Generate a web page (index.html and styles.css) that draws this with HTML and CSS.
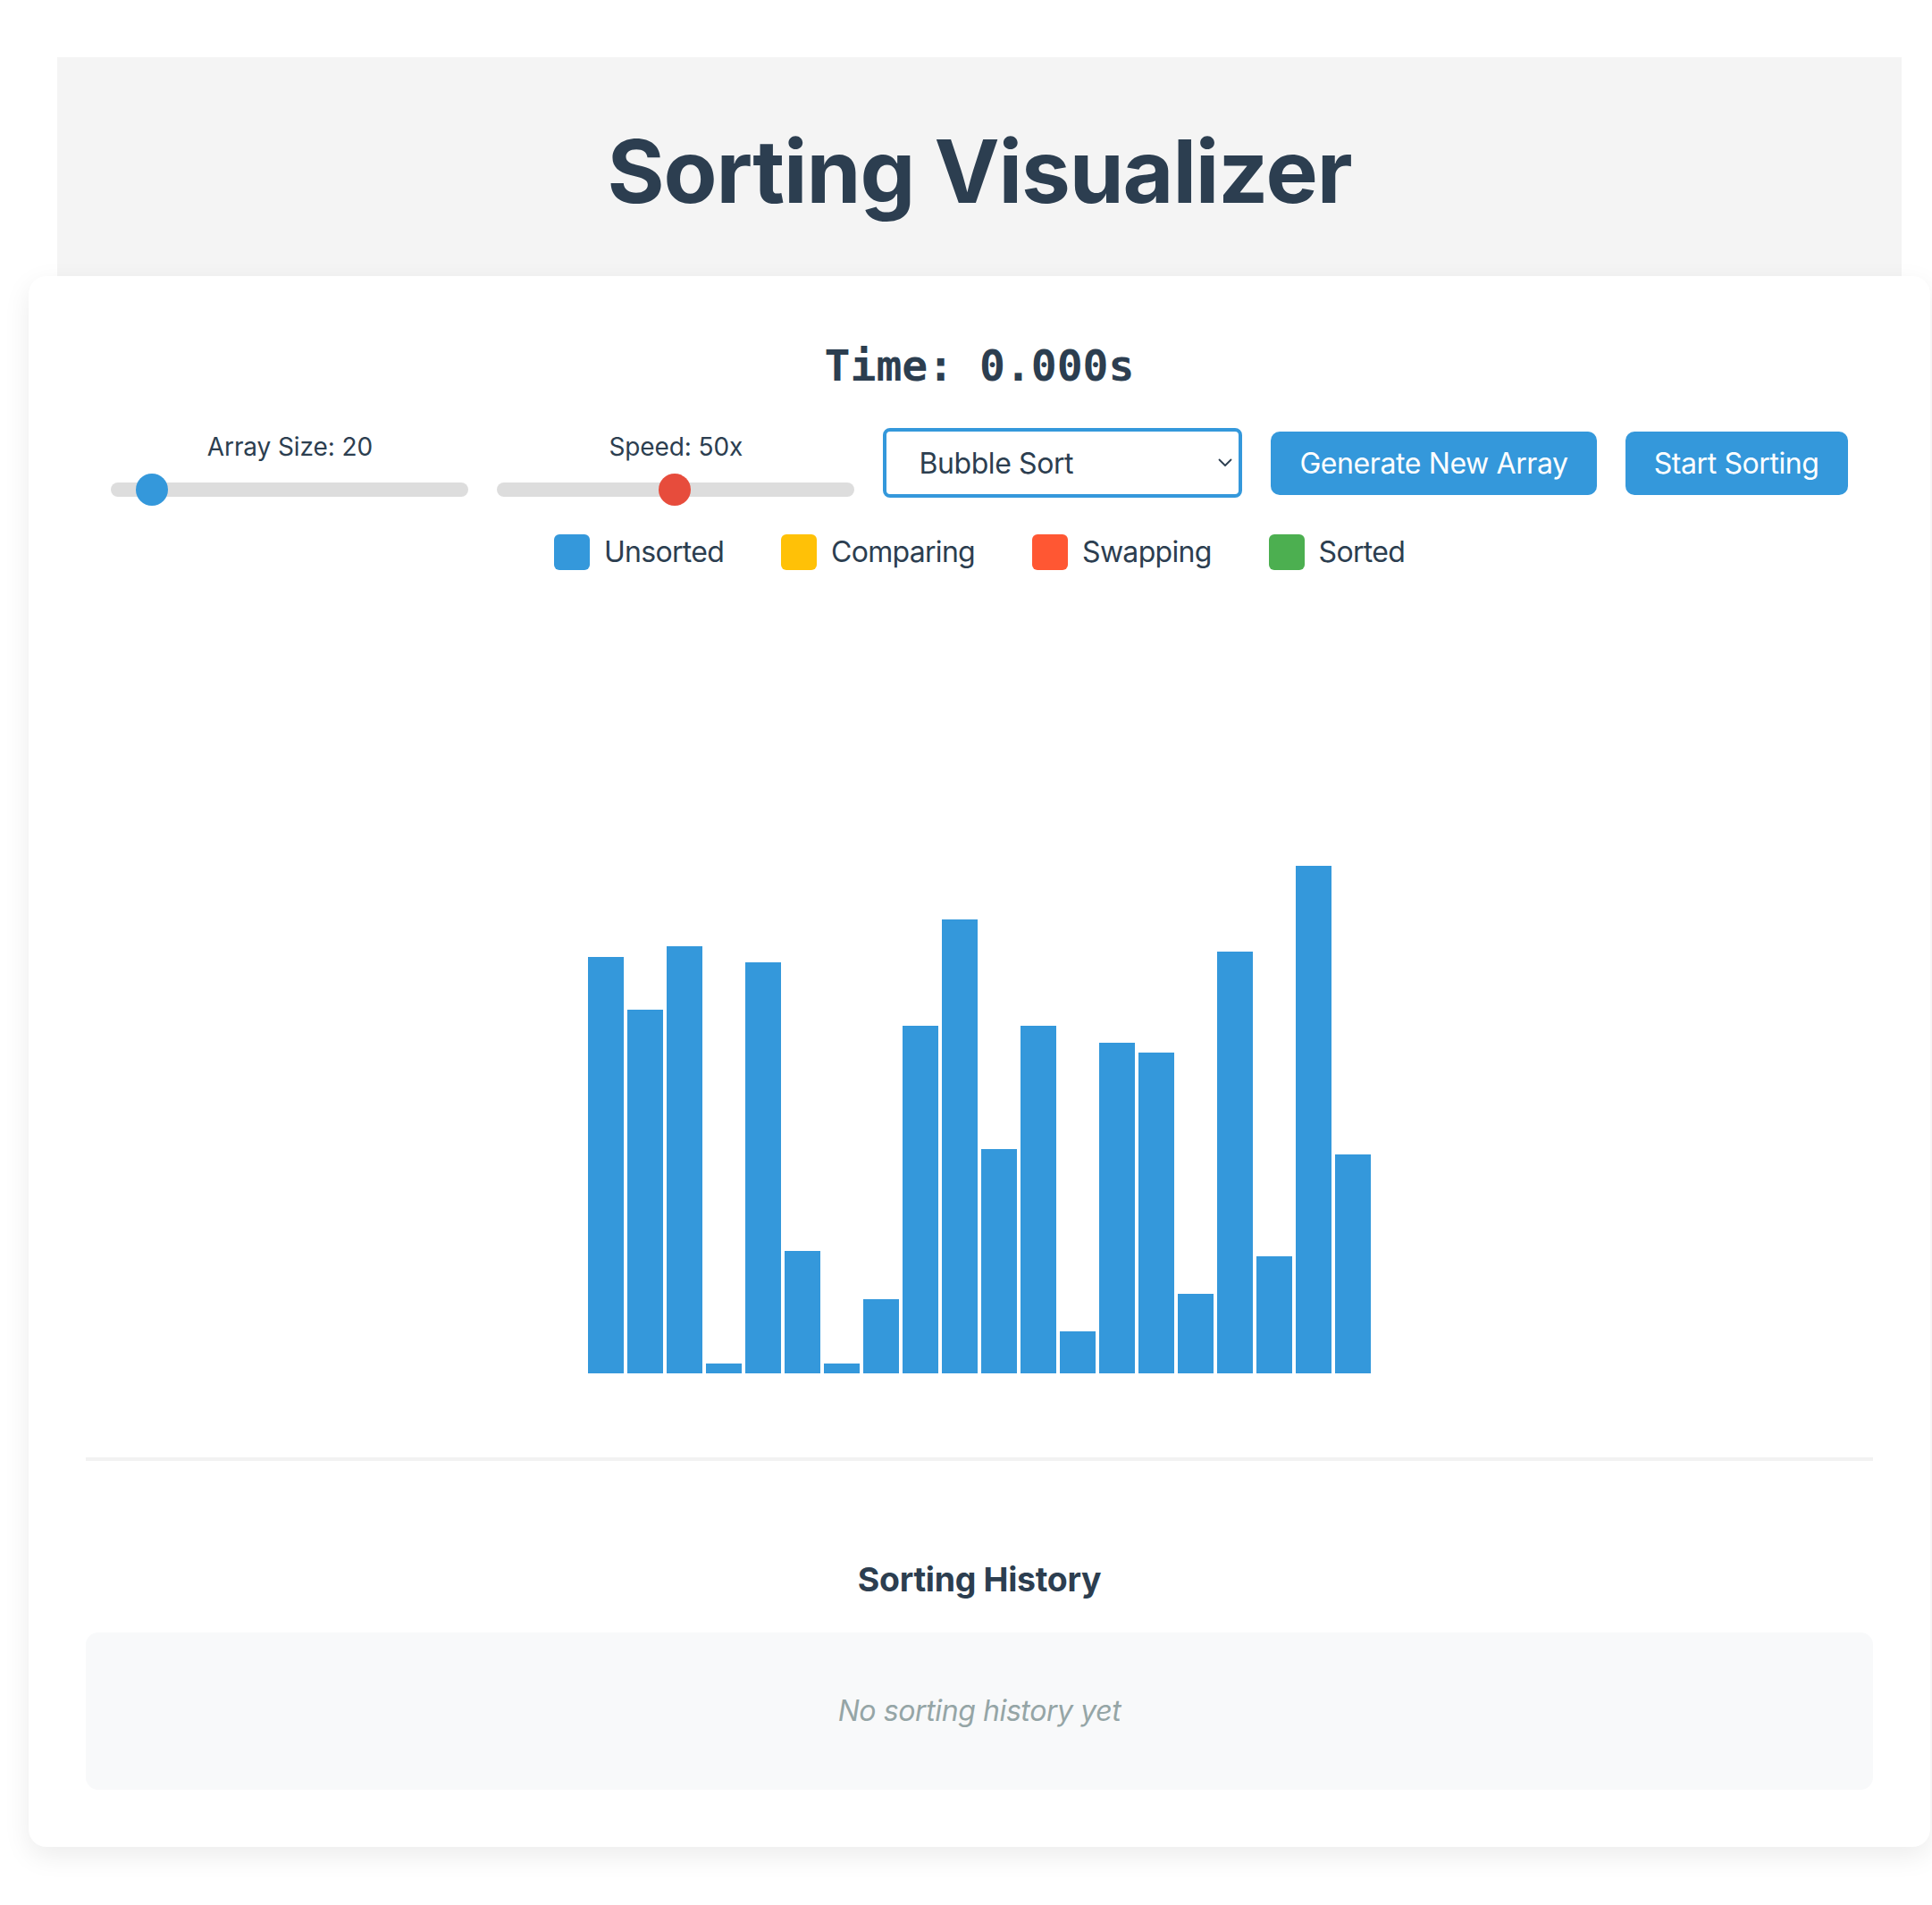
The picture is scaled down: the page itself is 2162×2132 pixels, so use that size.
FILE: index.html
```html
<!DOCTYPE html>
<html lang="en">
<head>
<meta charset="utf-8">
<title>Sorting Visualizer</title>
<link rel="stylesheet" href="styles.css">
</head>
<body>
<div class="app">
  <header class="header">
    <h1 class="title">Sorting Visualizer</h1>
  </header>
  <main class="card">
    <div class="timer">Time: 0.000s</div>
    <div class="controls">
      <div class="slider-group">
        <label class="slider-label">Array Size: 20</label>
        <input class="slider" type="range" min="5" max="200" value="20">
      </div>
      <div class="slider-group">
        <label class="slider-label">Speed: 50x</label>
        <input class="slider slider-speed" type="range" min="1" max="100" value="50">
      </div>
      <div class="select-wrap">
        <select class="algo-select">
          <option>Bubble Sort</option>
          <option>Selection Sort</option>
          <option>Insertion Sort</option>
          <option>Merge Sort</option>
          <option>Quick Sort</option>
        </select>
        <svg class="select-chevron" width="16" height="10" viewBox="0 0 16 10" aria-hidden="true">
          <path d="M1.5 1.5 L8 8 L14.5 1.5" fill="none" stroke="#2c3e50" stroke-width="1.8" stroke-linecap="round" stroke-linejoin="round"/>
        </svg>
      </div>
      <button class="btn">Generate New Array</button>
      <button class="btn">Start Sorting</button>
    </div>
    <div class="legend">
      <div class="legend-item"><span class="swatch swatch-unsorted"></span>Unsorted</div>
      <div class="legend-item"><span class="swatch swatch-comparing"></span>Comparing</div>
      <div class="legend-item"><span class="swatch swatch-swapping"></span>Swapping</div>
      <div class="legend-item"><span class="swatch swatch-sorted"></span>Sorted</div>
    </div>
    <div class="bars">
      <div class="bar" style="height:466px"></div>
      <div class="bar" style="height:407px"></div>
      <div class="bar" style="height:478px"></div>
      <div class="bar" style="height:11px"></div>
      <div class="bar" style="height:460px"></div>
      <div class="bar" style="height:137px"></div>
      <div class="bar" style="height:11px"></div>
      <div class="bar" style="height:83px"></div>
      <div class="bar" style="height:389px"></div>
      <div class="bar" style="height:508px"></div>
      <div class="bar" style="height:251px"></div>
      <div class="bar" style="height:389px"></div>
      <div class="bar" style="height:47px"></div>
      <div class="bar" style="height:370px"></div>
      <div class="bar" style="height:359px"></div>
      <div class="bar" style="height:89px"></div>
      <div class="bar" style="height:472px"></div>
      <div class="bar" style="height:131px"></div>
      <div class="bar" style="height:568px"></div>
      <div class="bar" style="height:245px"></div>
    </div>
    <section class="history">
      <h3 class="history-title">Sorting History</h3>
      <div class="history-box">
        <p class="history-empty">No sorting history yet</p>
      </div>
    </section>
  </main>
</div>
</body>
</html>
```

FILE: styles.css
```css
* {
  box-sizing: border-box;
}

body {
  margin: 0;
  background: #ffffff;
  font-family: Inter, "Noto Sans", sans-serif;
  color: #2c3e50;
  line-height: 1.5;
}

.app {
  width: 2128px;
  margin-left: 32px;
  padding-top: 64px;
  padding-bottom: 64px;
}

.header {
  margin: 0 32px;
  background: #f4f4f4;
  padding: 69px 0 59px;
  text-align: center;
}

.title {
  margin: 0;
  font-size: 98px;
  line-height: 117px;
  font-weight: 700;
  letter-spacing: -1.1px;
  color: #2c3e50;
}

.card {
  display: block;
  background: #ffffff;
  border-radius: 20px;
  padding: 64px;
  box-shadow: 0 10px 30px rgba(0, 0, 0, 0.08);
}

.timer {
  font-family: "DejaVu Sans Mono", "Liberation Mono", monospace;
  font-weight: 700;
  font-size: 48px;
  line-height: 72px;
  text-align: center;
  margin-bottom: 32px;
}

.controls {
  display: flex;
  justify-content: center;
  align-items: center;
  gap: 32px;
}

.slider-group {
  display: flex;
  flex-direction: column;
  align-items: center;
}

.slider-label {
  font-size: 28px;
  line-height: 42px;
  letter-spacing: -0.1px;
  margin-top: 2px;
}

.slider {
  -webkit-appearance: none;
  appearance: none;
  width: 400px;
  height: 16px;
  margin: 19px 0 3px;
  background: #dddddd;
  border-radius: 8px;
  outline: none;
}

.slider::-webkit-slider-thumb {
  -webkit-appearance: none;
  appearance: none;
  width: 36px;
  height: 36px;
  border-radius: 50%;
  background: #3498db;
  border: none;
}

.slider-speed::-webkit-slider-thumb {
  background: #e74c3c;
}

.select-wrap {
  position: relative;
}

.algo-select {
  -webkit-appearance: none;
  appearance: none;
  display: block;
  width: 402px;
  height: 78px;
  padding: 0 40px 0 36px;
  font-family: Inter, "Noto Sans", sans-serif;
  font-size: 32px;
  letter-spacing: -0.4px;
  color: #2c3e50;
  background: #ffffff;
  border: 4px solid #3498db;
  border-radius: 8px;
  outline: none;
}

.select-chevron {
  position: absolute;
  right: 11px;
  top: 34px;
  pointer-events: none;
}

.btn {
  font-family: Inter, "Noto Sans", sans-serif;
  font-size: 32px;
  letter-spacing: -0.4px;
  padding: 16px 32px;
  color: #ffffff;
  background: #3498db;
  border: none;
  border-radius: 10px;
  cursor: pointer;
}

.legend {
  display: flex;
  justify-content: center;
  gap: 64px;
  margin-top: 35px;
}

.legend-item {
  display: flex;
  align-items: center;
  gap: 16px;
  font-size: 32px;
  line-height: 48px;
  letter-spacing: -0.7px;
}

.swatch {
  width: 40px;
  height: 40px;
  border-radius: 6px;
}

.swatch-unsorted { background: #3498db; }
.swatch-comparing { background: #ffc107; }
.swatch-swapping { background: #ff5733; }
.swatch-sorted { background: #4caf50; }

.bars {
  display: flex;
  justify-content: center;
  align-items: flex-end;
  height: 863px;
  margin-top: 32px;
}

.bar {
  width: 40px;
  margin: 0 2px;
  background: #3498db;
}

.history {
  margin-top: 94px;
  border-top: 4px solid #f2f2f2;
  padding-top: 105px;
}

.history-title {
  margin: 0 0 31px;
  font-size: 37.44px;
  line-height: 56px;
  font-weight: 700;
  letter-spacing: -0.3px;
  text-align: center;
}

.history-box {
  background: #f8f9fa;
  border-radius: 14px;
  padding: 32px;
}

.history-empty {
  margin: 32px 0;
  font-size: 32px;
  line-height: 48px;
  font-style: italic;
  letter-spacing: -0.4px;
  color: #95a5a6;
  text-align: center;
}
```
